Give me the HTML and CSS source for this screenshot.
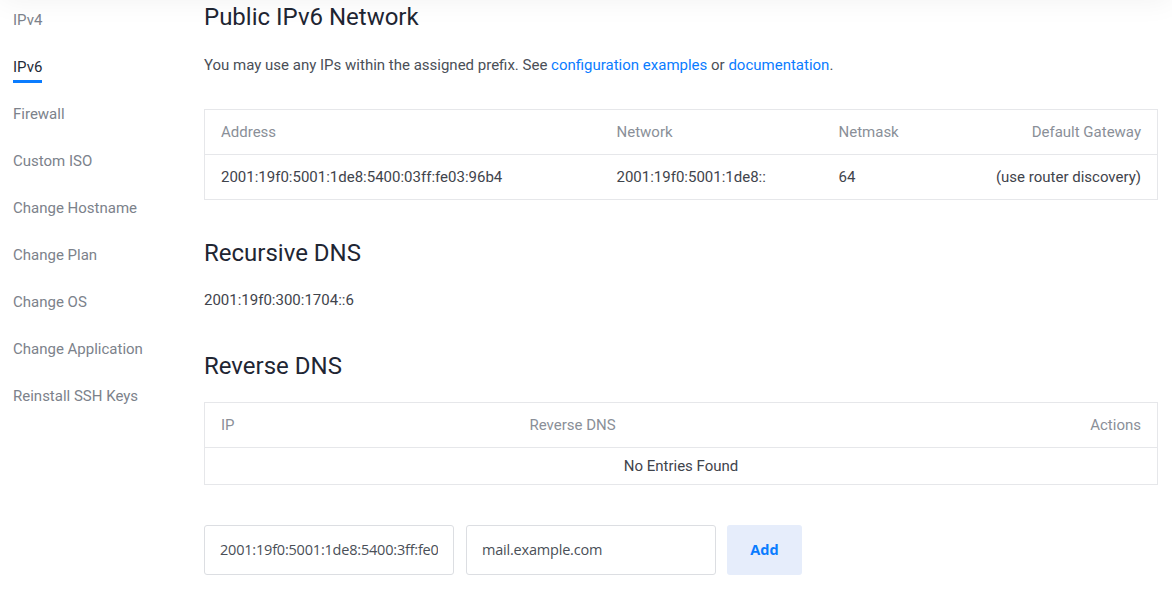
FILE: index.html
```html
<!DOCTYPE html>
<html>
<head>
<meta charset="utf-8">
<link rel="stylesheet" href="styles.css">
</head>
<body>
<div class="topshade"></div>
<div class="page">
  <nav class="sidebar">
    <a class="nav-item">IPv4</a>
    <a class="nav-item active">IPv6</a>
    <a class="nav-item">Firewall</a>
    <a class="nav-item">Custom ISO</a>
    <a class="nav-item">Change Hostname</a>
    <a class="nav-item">Change Plan</a>
    <a class="nav-item">Change OS</a>
    <a class="nav-item">Change Application</a>
    <a class="nav-item">Reinstall SSH Keys</a>
  </nav>
  <main class="content">
    <h2 class="title first">Public IPv6 Network</h2>
    <p class="intro">You may use any IPs within the assigned prefix. See <a class="link">configuration examples</a> or <a class="link">documentation</a>.</p>
    <table class="tbl net">
      <thead>
        <tr><th class="c-addr">Address</th><th class="c-net">Network</th><th class="c-mask">Netmask</th><th class="right">Default Gateway</th></tr>
      </thead>
      <tbody>
        <tr><td>2001:19f0:5001:1de8:5400:03ff:fe03:96b4</td><td>2001:19f0:5001:1de8::</td><td>64</td><td class="right">(use router discovery)</td></tr>
      </tbody>
    </table>
    <h2 class="title">Recursive DNS</h2>
    <p class="dns">2001:19f0:300:1704::6</p>
    <h2 class="title">Reverse DNS</h2>
    <table class="tbl rdns">
      <thead>
        <tr><th class="c-ip">IP</th><th>Reverse DNS</th><th class="right">Actions</th></tr>
      </thead>
      <tbody>
        <tr><td colspan="3" class="empty">No Entries Found</td></tr>
      </tbody>
    </table>
    <form class="addform">
      <input class="field" type="text" value="2001:19f0:5001:1de8:5400:3ff:fe03:96b4">
      <input class="field" type="text" value="mail.example.com">
      <button class="btn" type="button">Add</button>
    </form>
  </main>
</div>
</body>
</html>
```
FILE: styles.css
```css
* { box-sizing: border-box; }
html, body { margin: 0; padding: 0; background: #fff; }
body {
  font-family: Roboto, "Liberation Sans", sans-serif;
  font-size: 15px;
  color: #4a4f57;
  overflow: hidden;
  height: 590px;
  position: relative;
}
.topshade {
  position: absolute;
  left: 0; right: 0; top: -30px;
  height: 30px;
  box-shadow: 0 0 30px rgba(0,0,0,0.06);
}
.page {
  display: flex;
}
.sidebar {
  width: 204px;
  flex: none;
  padding-left: 13px;
  display: flex;
  flex-direction: column;
  align-items: flex-start;
}
.nav-item {
  display: block;
  height: 47px;
  line-height: 22px;
  padding-top: 9px;
  color: #7c828b;
  font-size: 15px;
  position: relative;
}
.nav-item.active {
  color: #242b38;
}
.nav-item.active::after {
  content: "";
  position: absolute;
  left: 0; right: 0;
  top: 33px;
  height: 3px;
  background: #0a7cff;
}
.content {
  width: 954px;
  flex: none;
}
.title {
  margin: 0;
  font-size: 24px;
  font-weight: 400;
  color: #1f2633;
  line-height: 30px;
}
.title.first { margin-top: 2px; }
.intro {
  margin: 22px 0 0;
  line-height: 22px;
  color: #4a4f57;
}
.link { color: #0a7cff; text-decoration: none; }
.tbl {
  width: 954px;
  border-collapse: collapse;
  border: 1px solid #e6e7ea;
  margin-top: 33px;
}
.tbl th {
  font-weight: 400;
  color: #8a8f98;
  text-align: left;
  height: 45px;
  padding: 0 16px;
  border-bottom: 1px solid #e6e7ea;
}
.tbl td {
  height: 45px;
  padding: 0 16px;
  color: #3f444c;
}
.tbl .right { text-align: right; }
.net .c-addr { width: 396px; }
.net .c-net { width: 222px; }
.net .c-mask { width: 150px; }
.rdns .c-ip { width: 309px; }
.rdns td.empty { height: 37px; text-align: center; }
.net + .title { margin-top: 38px; }
.dns { margin: 21px 0 0; line-height: 22px; color: #3f444c; }
.dns + .title { margin-top: 40px; }
.tbl.rdns { margin-top: 21px; }
.addform {
  display: flex;
  gap: 12px;
  margin-top: 40px;
}
.field {
  width: 250px;
  height: 50px;
  border: 1px solid #dcdee2;
  border-radius: 3px;
  padding: 0 15px 2px;
  font-family: "Open Sans", sans-serif;
  font-size: 14.5px;
  letter-spacing: -0.2px;
  color: #4a4f57;
  background: #fff;
}
.btn {
  width: 75px;
  height: 50px;
  border: none;
  border-radius: 3px;
  margin-left: -1px;
  padding-bottom: 2px;
  background: #e6edfb;
  color: #0a7cff;
  font-family: "Open Sans", sans-serif;
  font-weight: 700;
  font-size: 14.5px;
}
```
